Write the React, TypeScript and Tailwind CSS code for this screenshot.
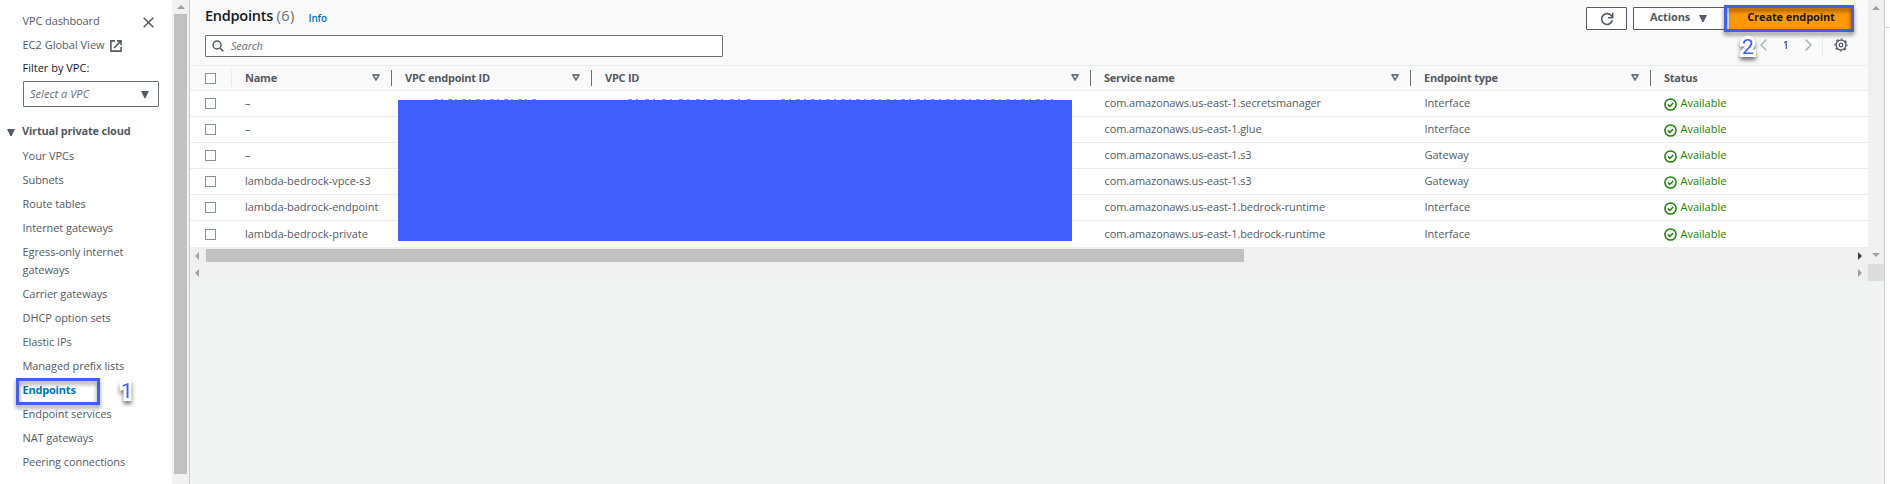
import type { ReactNode } from 'react';

const navTop = ['Your VPCs', 'Subnets', 'Route tables', 'Internet gateways'];
const navBottom = ['Carrier gateways', 'DHCP option sets', 'Elastic IPs', 'Managed prefix lists'];
const navLast = ['Endpoint services', 'NAT gateways', 'Peering connections'];

type Row = { name: string; service: string; type: string };

const rows: Row[] = [
  { name: '–', service: 'secretsmanager', type: 'Interface' },
  { name: '–', service: 'glue', type: 'Interface' },
  { name: '–', service: 's3', type: 'Gateway' },
  { name: 'lambda-bedrock-vpce-s3', service: 's3', type: 'Gateway' },
  { name: 'lambda-badrock-endpoint', service: 'bedrock-runtime', type: 'Interface' },
  { name: 'lambda-bedrock-private', service: 'bedrock-runtime', type: 'Interface' },
];

const gridCols = 'grid grid-cols-[42px_160px_200px_499px_320px_240px_217px]';

function NavItem({ children }: { children: ReactNode }) {
  return <li className="h-6 leading-6 tracking-[-0.07px]">{children}</li>;
}

function Triangle({ className }: { className: string }) {
  return (
    <svg viewBox="0 0 8 7" className={className} fill="currentColor">
      <path d="M0 0H8L4.6 7H3.4Z" />
    </svg>
  );
}

function ScrollArrow({ dir, dark }: { dir: 'up' | 'down' | 'left' | 'right'; dark?: boolean }) {
  const paths = { up: 'M0 6L4 2L8 6Z', down: 'M0 2L4 6L8 2Z', left: 'M6 0L2 4L6 8Z', right: 'M2 0L6 4L2 8Z' };
  return (
    <svg viewBox="0 0 8 8" className="size-2 shrink-0">
      <path d={paths[dir]} fill={dark ? '#404040' : '#a0a0a0'} />
    </svg>
  );
}

function HeaderCell({ children, last }: { children: ReactNode; last?: boolean }) {
  return (
    <div
      className={
        last
          ? 'flex h-4 items-center pl-[13px]'
          : 'flex h-4 items-center justify-between border-r border-[#687078] pr-[11px] pl-[13px]'
      }
    >
      <span className="whitespace-nowrap">{children}</span>
      {!last && (
        <svg viewBox="0 0 8 7" className="mb-px h-[7px] w-2 text-[#687078]">
          <path d="M1 0.9H7L4 6Z" fill="none" stroke="currentColor" strokeWidth="1.6" strokeLinejoin="round" />
        </svg>
      )}
    </div>
  );
}

function Checkbox() {
  return <div className="ml-[15px] size-[11px] border border-[#879196] bg-white" />;
}

function Available() {
  return (
    <div className="flex items-center text-[#1d8102]">
      <svg viewBox="0 0 13 13" className="mt-px ml-[13px] size-[13px]" fill="none" stroke="currentColor" strokeWidth="1.5">
        <circle cx="6.5" cy="6.5" r="5.6" />
        <path d="M3.9 6.5L5.8 8.4L9.2 4.9" />
      </svg>
      <span className="mb-px ml-[3.5px]">Available</span>
    </div>
  );
}

function Marker({ children }: { children: ReactNode }) {
  return (
    <span className="font-['Roboto',sans-serif] text-[21px] leading-6 font-normal tracking-normal text-[#415efd] drop-shadow-[0_3px_2px_rgba(0,0,0,0.55)] [-webkit-text-stroke:6px_white] [paint-order:stroke_fill] [stroke-linejoin:round]">
      {children}
    </span>
  );
}

function Sidebar() {
  return (
    <aside className="w-[172px] shrink-0 overflow-hidden bg-white text-[#545b64]">
      <div className="flex h-[33px] items-center justify-between pt-[9px] pr-[18px] pl-[22.5px]">
        <span className="tracking-[-0.11px]">VPC dashboard</span>
        <svg viewBox="0 0 11 11" className="mt-[3px] size-[11px]" stroke="currentColor" strokeWidth="1.5">
          <path d="M0.7 0.7L10.3 10.3M10.3 0.7L0.7 10.3" />
        </svg>
      </div>
      <div className="flex h-6 items-center pl-[22.5px]">
        <span>EC2 Global View</span>
        <svg viewBox="0 0 12 12" className="mt-[2px] ml-[5px] size-3" fill="none" stroke="currentColor" strokeWidth="1.6">
          <path d="M5 0.9H0.9V11.1H11.1V7M7 0.9H11.1V5M11 1L4 8" />
        </svg>
      </div>
      <div className="h-6 pl-[22.5px] leading-[22px] text-[#16191f]">Filter by VPC:</div>
      <div className="ml-[23px] flex h-[26px] w-[136px] items-center justify-between rounded-[1px] border border-[#687078] pr-[9px] pl-[6px] italic">
        <span className="mb-px tracking-[0.05px] text-[#687078]">Select a VPC</span>
        <Triangle className="h-[7px] w-2" />
      </div>
      <div className="mt-[12px] mb-px flex h-6 items-center pl-[7px]">
        <Triangle className="mt-[3px] h-[7px] w-2" />
        <span className="ml-[7px] font-bold tracking-[-0.2px]">Virtual private cloud</span>
      </div>
      <ul className="pl-[22.5px]">
        {navTop.map((t) => (
          <NavItem key={t}>{t}</NavItem>
        ))}
        <li className="h-[42px] pt-[3px] leading-[18px] tracking-[-0.07px]">
          Egress-only internet
          <br />
          gateways
        </li>
        {navBottom.map((t) => (
          <NavItem key={t}>{t}</NavItem>
        ))}
        <li className="relative h-6 leading-6 font-bold tracking-[-0.2px] text-[#0073bb]">
          Endpoints
          <div className="absolute top-0 -left-[6.5px] h-[27px] w-[84px] border-[3px] border-[#415efd] [filter:drop-shadow(0_3px_2px_rgba(0,0,0,0.45))]" />
          <div className="absolute top-px left-[98.5px]">
            <Marker>1</Marker>
          </div>
        </li>
        {navLast.map((t) => (
          <NavItem key={t}>{t}</NavItem>
        ))}
      </ul>
    </aside>
  );
}

function Toolbar() {
  return (
    <div className="flex h-[65px] justify-between bg-[#fafafa] pr-[16px] pl-[15px]">
      <div>
        <div className="flex h-[35px] items-center">
          <h1 className="mb-[3px] text-[14.5px] font-semibold tracking-[-0.25px] text-[#16191f]">
            Endpoints <span className="font-normal tracking-[0.4px] text-[#687078]">(6)</span>
          </h1>
          <a className="ml-[14px] text-[10px] font-semibold tracking-[-0.2px] text-[#0073bb]">Info</a>
        </div>
        <div className="flex h-[22px] w-[518px] items-center rounded-[1px] border border-[#687078] bg-white pl-[6px]">
          <svg viewBox="0 0 12 12" className="size-3 text-[#545b64]" fill="none" stroke="currentColor" strokeWidth="1.5">
            <circle cx="5" cy="5" r="4" />
            <path d="M8 8L11.4 11.4" />
          </svg>
          <span className="ml-[7px] tracking-[-0.2px] text-[#687078] italic">Search</span>
        </div>
      </div>
      <div>
        <div className="flex h-[34px] items-start pt-[7px] font-bold text-[#545b64]">
          <div className="flex h-[23px] w-[41px] items-center justify-center rounded-[1px] border border-[#545b64] bg-white">
            <svg viewBox="0 0 14 14" className="size-[14px]" fill="none" stroke="currentColor" strokeWidth="1.6">
              <path d="M12.3 8.3A5.4 5.4 0 1 1 11.6 4.1L12.4 5.4M12.7 0.8V5.7H8" />
            </svg>
          </div>
          <div className="ml-[6px] flex h-[23px] w-[92px] items-center rounded-[1px] border border-[#545b64] bg-white pl-[16px]">
            <span className="mb-[3px] tracking-[-0.1px]">Actions</span>
            <Triangle className="ml-[9px] h-[7px] w-2" />
          </div>
          <div className="relative ml-[4px] flex h-[23px] w-[123px] items-center justify-center bg-[#ff9900] text-[#16191f]">
            <span className="mb-[3px] ml-px tracking-[-0.1px] whitespace-nowrap">Create endpoint</span>
            <div className="absolute -top-[2px] -left-[5px] h-[27px] w-[130px] border-[3px] border-[#415efd] [filter:drop-shadow(0_3px_2px_rgba(0,0,0,0.5))]" />
          </div>
        </div>
        <div className="flex h-[22px] items-center justify-end pr-[4px]">
          <div className="relative z-10 mt-[3px] mr-[6px]">
            <Marker>2</Marker>
          </div>
          <svg viewBox="0 0 7 12" className="h-3 w-[7px]" fill="none" stroke="#aab7b8" strokeWidth="1.5">
            <path d="M6.3 0.6L1 6L6.3 11.4" />
          </svg>
          <span className="mx-[16px] text-[#16191f]">1</span>
          <svg viewBox="0 0 7 12" className="h-3 w-[7px]" fill="none" stroke="#aab7b8" strokeWidth="1.5">
            <path d="M0.7 0.6L6 6L0.7 11.4" />
          </svg>
          <div className="ml-[10px] h-[22px] w-px bg-[#eaeded]" />
          <svg viewBox="0 0 14 14" className="ml-[11px] size-[14px] text-[#545b64]" fill="none" stroke="currentColor">
            <circle cx="7" cy="7" r="4.9" strokeWidth="1.3" />
            <circle cx="7" cy="7" r="6" strokeWidth="1.2" strokeDasharray="2.356 2.356" strokeDashoffset="1.178" />
            <circle cx="7" cy="7" r="1.8" strokeWidth="1.3" />
          </svg>
        </div>
      </div>
    </div>
  );
}

export default function App() {
  return (
    <div className="flex h-[484px] w-[1890px] overflow-hidden bg-white font-['Open_Sans','Noto_Sans',sans-serif] text-[11px] leading-4">
      <Sidebar />
      <div className="flex w-[17px] shrink-0 flex-col items-center bg-[#f1f1f1]">
        <div className="flex h-[14px] items-center">
          <ScrollArrow dir="up" />
        </div>
        <div className="h-[460px] w-[13px] bg-[#c1c1c1]" />
      </div>
      <div className="w-px shrink-0 bg-[#ccc]" />

      <main className="flex w-[1694px] shrink-0 flex-col bg-[#f2f3f3]">
        <div className="flex h-[264px]">
          <div className="relative w-[1678px] shrink-0 bg-white">
            <Toolbar />
            <div
              className={`${gridCols} h-[26px] items-center border-y border-[#eaeded] bg-[#fafafa] font-bold tracking-[-0.24px] text-[#545b64]`}
            >
              <div className="flex h-4 items-center border-r border-[#eaeded]">
                <Checkbox />
              </div>
              <HeaderCell>Name</HeaderCell>
              <HeaderCell>VPC endpoint ID</HeaderCell>
              <HeaderCell>VPC ID</HeaderCell>
              <HeaderCell>Service name</HeaderCell>
              <HeaderCell>Endpoint type</HeaderCell>
              <HeaderCell last>Status</HeaderCell>
            </div>
            {rows.map((r, i) => (
              <div
                key={i}
                className={`${gridCols} h-[26px] items-center text-[#545b64] ${i < rows.length - 1 ? 'border-b border-[#eaeded]' : ''}`}
              >
                <Checkbox />
                <span className="mb-px pl-[13px] tracking-[-0.02px]">{r.name}</span>
                <span />
                <span />
                <span className="mb-px pl-[13.5px] tracking-[-0.11px]">com.amazonaws.us-east-1.{r.service}</span>
                <span className="mb-px pl-[13.5px]">{r.type}</span>
                <Available />
              </div>
            ))}
            <div className="flex h-[17px] items-center justify-between bg-[#f0f0f0] pr-1 pl-[3px]">
              <ScrollArrow dir="left" />
              <div className="mr-auto ml-[5px] h-[13px] w-[1038px] bg-[#c1c1c1]" />
              <ScrollArrow dir="right" dark />
            </div>
            <div className="absolute top-[99px] left-[244px] flex h-px">
              <div className="h-px w-[102px] bg-[repeating-linear-gradient(90deg,#6fa8cc_0_4px,#fff_4px_7px,#6fa8cc_7px_9px,#fff_9px_14px)]" />
              <div className="ml-[92px] h-px w-[125px] bg-[repeating-linear-gradient(90deg,#6fa8cc_0_4px,#fff_4px_8px,#6fa8cc_8px_10px,#fff_10px_17px)]" />
              <div className="ml-[28px] h-px w-[272px] bg-[repeating-linear-gradient(90deg,#6fa8cc_0_4px,#fff_4px_8px,#6fa8cc_8px_10px,#fff_10px_15px)]" />
            </div>
            <div className="absolute top-[100px] left-[208px] h-[141px] w-[674px] bg-[#415efd]" />
          </div>
          <div className="flex w-4 shrink-0 flex-col items-center justify-between bg-[#f0f0f0] pt-1 pb-[5px]">
            <ScrollArrow dir="up" />
            <ScrollArrow dir="down" />
          </div>
        </div>
        <div className="flex h-[17px] items-center justify-between bg-[#f0f0f0] pl-[3px]">
          <ScrollArrow dir="left" />
          <div className="flex h-full items-center">
            <ScrollArrow dir="right" />
            <div className="ml-1 h-full w-4 bg-[#dcdcdc]" />
          </div>
        </div>
      </main>
      <div className="w-px shrink-0 bg-[#ccc]" />
      <div className="h-[28px] flex-1 border-b border-[#d5dbdb] bg-white" />
    </div>
  );
}
